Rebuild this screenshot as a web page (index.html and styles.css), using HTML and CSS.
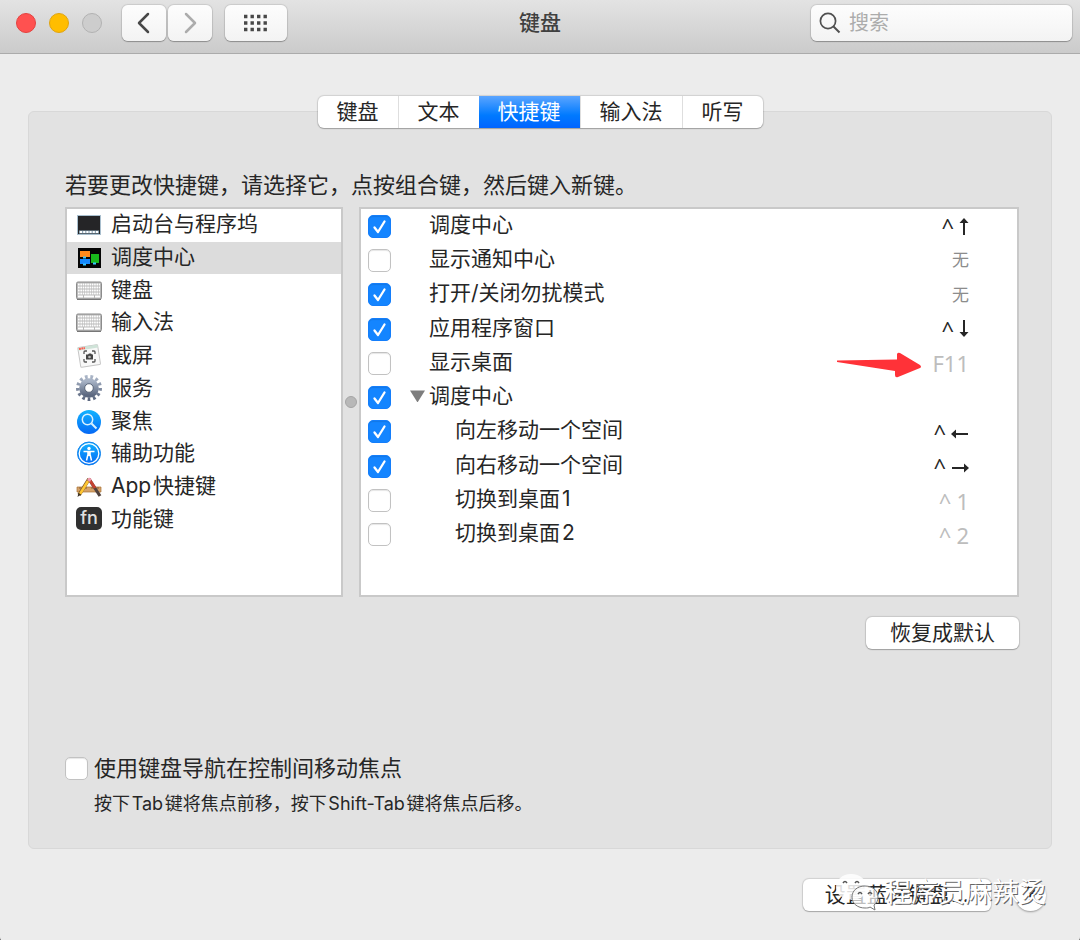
FILE: index.html
```html
<!DOCTYPE html>
<html lang="zh-CN">
<head>
    <meta charset="UTF-8">
    <meta name="viewport" content="width=device-width, initial-scale=1.0">
    <title>键盘</title>
    <link rel="stylesheet" href="styles.css">
</head>
<body>
    <svg class="defs" aria-hidden="true">
        <defs>
            <linearGradient id="blue" x1="0" y1="0" x2="0" y2="1">
                <stop offset="0" stop-color="#12b4ff"/>
                <stop offset="1" stop-color="#0568f5"/>
            </linearGradient>
            <linearGradient id="steel" x1="0" y1="0" x2="0" y2="1">
                <stop offset="0" stop-color="#a9b4c6"/>
                <stop offset="1" stop-color="#5c6880"/>
            </linearGradient>
            <symbol id="keyboard" viewBox="0 0 28 28">
                <rect x="1.5" y="6" width="25" height="17" rx="1.5" fill="#b9b9b9" stroke="#8c8c8c"/>
                <path d="M2 23.5h24" stroke="#777"/>
                <path d="M3 8.500h22M3 11.500h22M3 14.500h22M3 17.500h22" stroke="#fff" stroke-width="2" stroke-dasharray="1.700 .6"/>
                <path d="M3 20.500h5M9 20.500h10M20 20.500h5" stroke="#fff" stroke-width="2"/>
            </symbol>
            <symbol id="arrow-up" viewBox="0 0 10 20">
                <path d="M5 19V4" stroke="currentColor" stroke-width="2"/>
                <path d="M5 2l4.500 5h-9z" fill="currentColor"/>
            </symbol>
            <symbol id="arrow-left" viewBox="0 0 18 20">
                <path d="M17 12H4" stroke="currentColor" stroke-width="2"/>
                <path d="M0 12l5-4.500v9z" fill="currentColor"/>
            </symbol>
        </defs>
    </svg>

    <div class="window">
        <header class="toolbar">
            <div class="toolbar-left">
                <div class="lights">
                    <button class="light red" aria-label="关闭"></button>
                    <button class="light yellow" aria-label="最小化"></button>
                    <button class="light" aria-label="缩放" disabled></button>
                </div>
                <div class="nav">
                    <button class="tool" aria-label="后退">
                        <svg width="20" height="24" viewBox="0 0 20 24"><path d="M14 3L5 12l9 9" fill="none" stroke="#484848" stroke-width="2.500" stroke-linecap="round" stroke-linejoin="round"/></svg>
                    </button>
                    <button class="tool" aria-label="前进" disabled>
                        <svg width="20" height="24" viewBox="0 0 20 24"><path d="M6 3l9 9-9 9" fill="none" stroke="#acacac" stroke-width="2.500" stroke-linecap="round" stroke-linejoin="round"/></svg>
                    </button>
                </div>
                <button class="tool wide" aria-label="显示全部">
                    <svg width="26" height="18" viewBox="0 0 26 18"><path d="M1 2.500h24M1 9h24M1 15.500h24" stroke="#484848" stroke-width="3.400" stroke-dasharray="3.400 3.100"/></svg>
                </button>
            </div>
            <h1>键盘</h1>
            <div class="search">
                <svg width="22" height="22" viewBox="0 0 22 22"><circle cx="9" cy="9" r="7.600" fill="none" stroke="#505050" stroke-width="1.700"/><path d="M14.500 14.500l6 6" stroke="#505050" stroke-width="2"/></svg>
                <input type="search" placeholder="搜索" aria-label="搜索">
            </div>
        </header>

        <main>
            <nav class="tabs">
                <button>键盘</button>
                <button>文本</button>
                <button class="active">快捷键</button>
                <button>输入法</button>
                <button>听写</button>
            </nav>

            <section class="panel">
                <p class="intro">若要更改快捷键，请选择它，点按组合键，然后键入新键。</p>

                <div class="panes">
                    <ul class="categories">
                        <li>
                            <svg viewBox="0 0 28 28"><rect x="2.500" y="5.500" width="23" height="19" fill="#252527" stroke="#a9bfce"/><path d="M4 20.500h20v3H4z" fill="#8fa9bb"/><path d="M5 22h18" stroke="#fff" stroke-width="2" stroke-dasharray="2 1.200"/></svg>
                            启动台与程序坞
                        </li>
                        <li class="selected">
                            <svg viewBox="0 0 28 28"><path d="M3 5h23v20H3z" fill="#050505"/><path d="M5 8h10v6H5z" fill="#ff8a1c"/><path d="M5 16h10v5H5z" fill="#1689ff"/><path d="M16 11h8v9h-8z" fill="#19b81c"/><path d="M8 14.500h3M8 21.500h3M18 20.500h3" stroke="#36c8ff" stroke-width="2"/></svg>
                            调度中心
                        </li>
                        <li><svg><use href="#keyboard"/></svg>键盘</li>
                        <li><svg><use href="#keyboard"/></svg>输入法</li>
                        <li>
                            <svg viewBox="0 0 28 28"><g transform="rotate(-9 14 14)"><rect x="4" y="5" width="20" height="20" rx="1" fill="#f8f8f8" stroke="#c6c6c6"/><path d="M4 5h20v3H4z" fill="#cfe3d8"/><path d="M5 6.500h6" stroke="#ff5a4f" stroke-width="2" stroke-dasharray="2 .5"/></g><path d="M9 13v-2q0-1 1-1h2M17 10h2q1 0 1 1v2M20 18v2q0 1-1 1h-2M12 21h-2q-1 0-1-1v-2" fill="none" stroke="#555" stroke-width="1.300"/><path d="M11 13.500h2l1-1h2l1 1h1v5h-7z" fill="#444"/><circle cx="14.500" cy="16" r="1.300" fill="#bbb"/></svg>
                            截屏
                        </li>
                        <li>
                            <svg viewBox="0 0 28 28"><circle cx="14" cy="14" r="11.200" fill="none" stroke="url(#steel)" stroke-width="3.600" pathLength="130" stroke-dasharray="5 5"/><circle cx="14" cy="14" r="7" fill="none" stroke="url(#steel)" stroke-width="5.600"/><circle cx="14" cy="14" r="4.300" fill="none" stroke="#5d687b"/></svg>
                            服务
                        </li>
                        <li>
                            <svg viewBox="0 0 28 28"><circle cx="14" cy="15" r="12" fill="url(#blue)"/><circle cx="12.500" cy="12.500" r="5.200" fill="none" stroke="#d9f1ff" stroke-width="1.500"/><path d="M16.500 16.500l5 5" stroke="#d9f1ff" stroke-width="2"/></svg>
                            聚焦
                        </li>
                        <li>
                            <svg viewBox="0 0 28 28"><circle cx="14" cy="14.500" r="11.500" fill="url(#blue)" stroke="#1184ee"/><circle cx="14" cy="14.500" r="9.800" fill="none" stroke="#fff" stroke-width="1.300"/><circle cx="14" cy="9.500" r="1.700" fill="#fff"/><path d="M8.500 12.500h11M12.800 16l-1.300 5.500M15.200 16l1.300 5.500" fill="none" stroke="#fff" stroke-width="1.500"/><path d="M12.200 12h3.600v5h-3.600z" fill="#fff"/></svg>
                            辅助功能
                        </li>
                        <li>
                            <svg viewBox="0 0 28 28"><path d="M2 15h24v5H2z" fill="#d5a269" stroke="#a97337" stroke-width=".7"/><path d="M5 15v2M8 15v2M11 15v2M17 15v2M20 15v2M23 15v2" stroke="#70471f" stroke-width=".7"/><path d="M14 7l11 17" stroke="#52433e" stroke-width="3.200"/><path d="M14 7l6 9" stroke="#c64331" stroke-width="3"/><path d="M14 7L4 23" stroke="#7d5823" stroke-width="3.600"/><path d="M13 9L5 22" stroke="#ffc632" stroke-width="2.600"/><path d="M12 8l2-2.500 2.500 1.500-1.500 3z" fill="#f29aaf"/><path d="M2.500 25l1-4 2.500 1.500z" fill="#3b3023"/></svg>
                            App&#8202;快捷键
                        </li>
                        <li><span class="fn">fn</span>功能键</li>
                    </ul>

                    <div class="splitter"></div>

                    <div class="shortcuts">
                        <table>
                            <tbody>
                                <tr>
                                    <td class="check"><input type="checkbox" id="s1" checked></td>
                                    <td><label for="s1">调度中心</label></td>
                                    <td class="keys"><kbd>^<svg class="vertical" role="img" aria-label="上"><use href="#arrow-up"/></svg></kbd></td>
                                </tr>
                                <tr>
                                    <td class="check"><input type="checkbox" id="s2"></td>
                                    <td><label for="s2">显示通知中心</label></td>
                                    <td class="keys none">无</td>
                                </tr>
                                <tr>
                                    <td class="check"><input type="checkbox" id="s3" checked></td>
                                    <td><label for="s3">打开/关闭勿扰模式</label></td>
                                    <td class="keys none">无</td>
                                </tr>
                                <tr>
                                    <td class="check"><input type="checkbox" id="s4" checked></td>
                                    <td><label for="s4">应用程序窗口</label></td>
                                    <td class="keys"><kbd>^<svg class="vertical flip" role="img" aria-label="下"><use href="#arrow-up"/></svg></kbd></td>
                                </tr>
                                <tr>
                                    <td class="check"><input type="checkbox" id="s5"></td>
                                    <td><label for="s5">显示桌面</label></td>
                                    <td class="keys off">
                                        <kbd>F11</kbd>
                                        <svg class="pointer" viewBox="0 0 86 28" aria-hidden="true"><path d="M1 9.500l60-1V3q1-2 3-1l20 12q2 2 0 3L62 26q-3 1-3-2v-4L1 11z" fill="#ff3238"/></svg>
                                    </td>
                                </tr>
                                <tr>
                                    <td class="check"><input type="checkbox" id="s6" checked></td>
                                    <td class="group"><button class="toggle" aria-label="折叠"></button><label for="s6">调度中心</label></td>
                                    <td></td>
                                </tr>
                                <tr>
                                    <td class="check"><input type="checkbox" id="s7" checked></td>
                                    <td class="child"><label for="s7">向左移动一个空间</label></td>
                                    <td class="keys"><kbd>^<svg role="img" aria-label="左"><use href="#arrow-left"/></svg></kbd></td>
                                </tr>
                                <tr>
                                    <td class="check"><input type="checkbox" id="s8" checked></td>
                                    <td class="child"><label for="s8">向右移动一个空间</label></td>
                                    <td class="keys"><kbd>^<svg class="mirror" role="img" aria-label="右"><use href="#arrow-left"/></svg></kbd></td>
                                </tr>
                                <tr>
                                    <td class="check"><input type="checkbox" id="s9"></td>
                                    <td class="child"><label for="s9">切换到桌面&#8202;1</label></td>
                                    <td class="keys off"><kbd><span>^</span><span>1</span></kbd></td>
                                </tr>
                                <tr>
                                    <td class="check"><input type="checkbox" id="s10"></td>
                                    <td class="child"><label for="s10">切换到桌面&#8202;2</label></td>
                                    <td class="keys off"><kbd><span>^</span><span>2</span></kbd></td>
                                </tr>
                            </tbody>
                        </table>
                    </div>
                </div>

                <button class="push restore">恢复成默认</button>

                <div class="focus">
                    <input type="checkbox" id="focus">
                    <label for="focus">使用键盘导航在控制间移动焦点</label>
                    <p>按下&#8202;Tab&#8202;键将焦点前移，按下&#8202;Shift-Tab&#8202;键将焦点后移。</p>
                </div>
            </section>

            <footer>
                <button class="push">设置蓝牙键盘…</button>
                <button class="help" aria-label="帮助">?</button>
                <div class="watermark">
                    <svg width="48" height="42" viewBox="0 0 48 42">
                        <path d="M15 2C6 2 0 8 0 15c0 4 2 8 6 10l-2 5 6-3c12 3 21-3 21-12C31 8 24 2 15 2z" fill="#fff" fill-opacity=".85"/>
                        <path d="M29 14c-8 0-13 5-13 11 0 7 6 11 13 11 2 0 4 0 5-1l5 3-1-5c3-2 4-5 4-8 0-6-5-11-13-11z" fill="#fff" fill-opacity=".7" stroke="#777"/>
                        <path d="M7 11q2-3 4 0M19 11q2-3 4 0M22 22q2-3 4 0M32 22q2-3 4 0" fill="none" stroke="#555" stroke-width="1.500"/>
                    </svg>
                    <span>程序员麻辣烫</span>
                </div>
            </footer>
        </main>
    </div>
</body>
</html>
```

FILE: styles.css
```css
* {
    box-sizing: border-box;
}
body {
    margin: 0;
    background-color: #555;
    color: #262626;
    font-family: Inter, "Noto Sans CJK SC", sans-serif;
    font-size: 21px;
    line-height: 30px;
}
button, input {
    font: inherit;
    color: inherit;
}
button {
    border: none;
    padding: 0;
}
.defs {
    position: absolute;
    width: 0;
    height: 0;
}
.window {
    min-height: 100vh;
    background-color: #ececec;
    border-radius: 0 0 4px 4px;
}

/* toolbar */
.toolbar {
    display: grid;
    grid-template-columns: 1fr auto 1fr;
    align-items: center;
    height: 54px;
    padding: 0 8px 8px;
    background: linear-gradient(#e3e3e3, #cbcbcb);
    border-bottom: 1px solid #ababab;
}
.toolbar-left {
    display: flex;
    align-items: center;
    gap: 13px;
}
.lights {
    display: flex;
    gap: 13px;
    margin: 0 7px 0 8px;
}
.light {
    width: 20px;
    height: 20px;
    border: 1px solid #b2b2b2;
    border-radius: 50%;
    background-color: #cdcdcd;
}
.light.red {
    background-color: #ff5150;
    border-color: #e4423f;
}
.light.yellow {
    background-color: #ffbd00;
    border-color: #e0a410;
}
.nav {
    display: flex;
    gap: 2px;
}
.tool {
    display: flex;
    align-items: center;
    justify-content: center;
    width: 44px;
    height: 36px;
    border-radius: 6px;
    background: linear-gradient(#fdfdfd, #f3f3f3);
    box-shadow: 0 0 1px 1px rgba(0, 0, 0, 0.1), 0 1px 1px rgba(0, 0, 0, 0.25);
}
.tool.wide {
    width: 62px;
}
h1 {
    margin: 0;
    font-size: 21px;
    font-weight: 500;
    color: #404040;
}
.search {
    display: flex;
    align-items: center;
    justify-self: end;
    gap: 8px;
    width: 261px;
    height: 36px;
    padding: 0 8px;
    border-radius: 6px;
    background: linear-gradient(#fdfdfd, #f3f3f3);
    box-shadow: 0 0 1px 1px rgba(0, 0, 0, 0.1), 0 1px 1px rgba(0, 0, 0, 0.25);
}
.search svg {
    flex: none;
}
.search input {
    flex: 1;
    min-width: 0;
    border: none;
    padding: 0;
    outline: none;
    background: none;
    font-size: 20px;
}
.search input::placeholder {
    color: #acacac;
}

/* tabs */
main {
    padding: 42px 28px 30px;
}
.tabs {
    position: relative;
    display: flex;
    width: fit-content;
    margin: 0 auto -17px;
    border-radius: 6px;
    background-color: #fff;
    box-shadow: 0 0 1px 1px rgba(0, 0, 0, 0.12), 0 1px 1px rgba(0, 0, 0, 0.2);
}
.tabs button {
    height: 32px;
    padding: 0 19px;
    background: none;
    border-left: 1px solid #dedede;
}
.tabs button:first-child {
    border-left: none;
}
.tabs .active {
    color: #fff;
    border: none;
    background: linear-gradient(#5ba5ff, #007aff 60%, #0064ff);
}

/* panel */
.panel {
    display: flex;
    flex-direction: column;
    padding: 58px 32px 30px 36px;
    border: 1px solid #d8d8d8;
    border-radius: 6px;
    background-color: #e2e2e2;
}
.intro {
    margin: 0 0 7px;
    font-size: 22px;
}
.panes {
    display: grid;
    grid-template-columns: 278px 16px 1fr;
}
.categories, .shortcuts {
    border: 2px solid #c9c9c9;
    background-color: #fff;
}
.categories {
    display: grid;
    grid-auto-rows: 1fr;
    margin: 0;
    padding: 0 0 59px;
    list-style: none;
}
.categories li {
    display: flex;
    align-items: center;
    gap: 8px;
    padding: 0 0 2px 8px;
}
.categories li svg {
    width: 28px;
    height: 28px;
}
.categories .selected {
    background-color: #dcdcdc;
}
.fn {
    width: 26px;
    height: 23px;
    margin: 0 1px;
    border-radius: 5px;
    background-color: #303030;
    color: #e0e0e0;
    font-size: 18px;
    font-weight: 500;
    line-height: 22px;
    text-align: center;
}
.splitter {
    display: flex;
    align-items: center;
    justify-content: center;
}
.splitter::before {
    content: "";
    width: 10px;
    height: 10px;
    border: 1px solid #a5a5a5;
    border-radius: 50%;
    background-color: #b8b8b8;
}
.shortcuts {
    padding-bottom: 43px;
}
table {
    width: 100%;
    height: 343px;
    border-collapse: collapse;
}
td {
    padding: 0;
}
td label {
    display: block;
    padding-bottom: 3px;
}
.check {
    width: 68px;
    padding-left: 7px;
}
input[type="checkbox"] {
    appearance: none;
    display: block;
    width: 23px;
    height: 23px;
    margin: 0;
    border: 1px solid #c2c2c2;
    border-radius: 5px;
    background-color: #fff;
    box-shadow: inset 0 1px 1px rgba(0, 0, 0, 0.1);
}
input[type="checkbox"]:checked {
    border-color: #147efb;
    background: #1485ff url("data:image/svg+xml,%3Csvg xmlns='http://www.w3.org/2000/svg' viewBox='0 0 21 21'%3E%3Cpath d='M5.500 11.500l3.500 4.500L15.500 5.500' fill='none' stroke='white' stroke-width='2.300' stroke-linecap='round' stroke-linejoin='round'/%3E%3C/svg%3E");
}
.child {
    padding-left: 26px;
}
.group {
    position: relative;
}
.toggle {
    position: absolute;
    top: 10px;
    left: -19px;
    width: 15px;
    height: 12px;
    background-color: #7d7d7d;
    clip-path: polygon(0 0, 100% 0, 50% 100%);
}
.keys {
    position: relative;
    padding-right: 48px;
    text-align: right;
}
kbd {
    display: flex;
    align-items: center;
    justify-content: flex-end;
    gap: 5px;
    font-family: "Noto Sans", sans-serif;
    font-size: 22px;
}
kbd svg {
    width: 18px;
    height: 20px;
}
kbd .vertical {
    width: 10px;
}
.none {
    color: #8c8c8c;
    font-size: 17px;
}
.off {
    color: #bdbdbd;
}
.flip {
    transform: rotate(180deg);
}
.mirror {
    transform: scaleX(-1);
}
.pointer {
    position: absolute;
    top: 5px;
    right: 95px;
    width: 86px;
    height: 28px;
}
.push {
    height: 32px;
    padding: 0 22px;
    border-radius: 6px;
    background-color: #fff;
    box-shadow: 0 0 1px 1px rgba(0, 0, 0, 0.12), 0 1px 1px rgba(0, 0, 0, 0.2);
}
.restore {
    align-self: flex-end;
    margin-top: 20px;
    padding: 0 24px;
}
.focus {
    display: grid;
    grid-template-columns: auto 1fr;
    align-items: center;
    column-gap: 6px;
    margin-top: 104px;
}
.focus label {
    font-size: 22px;
}
.focus p {
    grid-column: 2;
    margin: 7px 0 0;
    font-size: 18px;
    line-height: 28px;
}

/* footer */
footer {
    position: relative;
    display: flex;
    align-items: center;
    justify-content: flex-end;
    gap: 24px;
    margin-top: 30px;
    padding-right: 6px;
}
.help {
    width: 31px;
    height: 31px;
    border-radius: 50%;
    background-color: #fff;
    box-shadow: 0 1px 2px rgba(0, 0, 0, 0.35);
}
.watermark {
    position: absolute;
    top: -7px;
    right: 6px;
    display: flex;
    align-items: center;
    color: #fff;
    font-size: 27px;
    text-shadow: 1px 1px 0 #666;
    pointer-events: none;
}
```
